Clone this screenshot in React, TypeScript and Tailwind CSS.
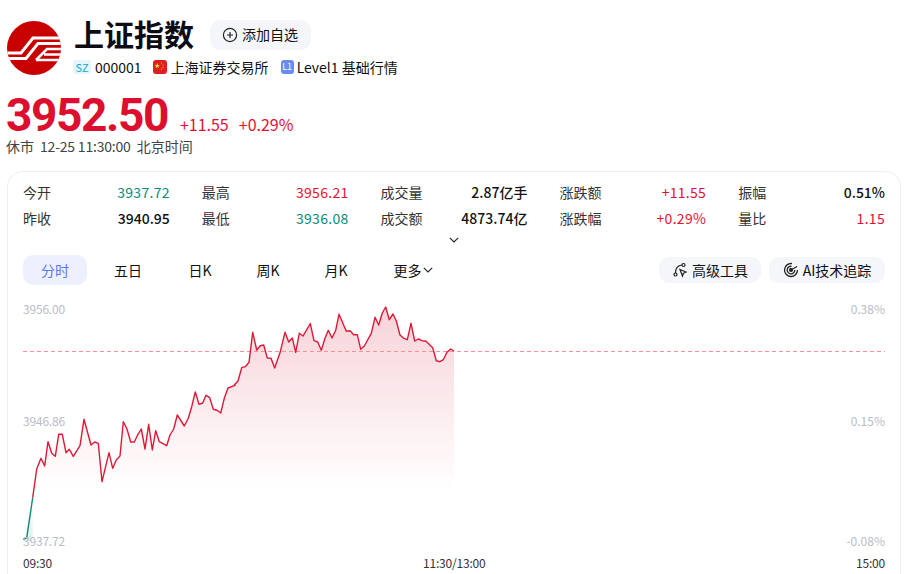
import React from "react";

const PTS_A: [number, number][] = [[70,733],[80,728],[98,608],[110,522],[123,490],[134,513],[144,440],[155,475],[166,484],[176,418],[187,418],[198,473],[208,463],[220,484],[240,452],[252,373],[273,450],[284,441],[295,445],[306,560],[327,473],[338,520],[349,495],[360,483],[370,380],[381,402],[392,441],[403,441],[414,418],[424,402],[435,462],[446,388],[457,465],[467,407],[478,440],[500,452],[510,420],[521,402],[532,360],[553,393],[565,370],[575,335],[586,291],[597,328],[608,324],[618,301],[629,308],[640,343],[651,346],[662,354],[673,310],[684,279],[705,271]];
const PTS_B: [number, number][] = [[12,271],[24,258],[35,218],[46,215],[57,202],[68,112],[80,165],[91,152],[101,150],[112,189],[123,190],[134,219],[151,170],[165,112],[176,141],[187,129],[197,172],[208,115],[219,123],[241,86],[252,137],[263,141],[274,166],[285,130],[295,106],[306,129],[317,106],[327,58],[349,109],[360,107],[371,119],[382,119],[392,163],[403,153],[424,115],[435,67],[446,90],[457,54],[467,36],[478,74],[489,57],[499,78],[510,120],[521,130],[532,134],[543,85],[554,138],[565,132],[576,137],[587,138],[608,158],[619,197],[630,200],[640,194],[651,172],[662,162],[672,168]];
const all = [
  ...PTS_A.map(([x, y]) => [x / 3, 295 + y / 3]),
  ...PTS_B.map(([x, y]) => [230 + x / 3, 295 + y / 3]),
].map(([x, y]) => [+x.toFixed(1), +y.toFixed(1)]);
const green = all.slice(0, 3);
const red = all.slice(2);
const line = (p: number[][]) => p.map((q) => q.join(",")).join(" ");

function Logo() {
  return (
    <svg width="54" height="54" viewBox="0 0 54 54" className="shrink-0">
      <defs>
        <clipPath id="lc"><circle cx="27" cy="27" r="27" /></clipPath>
      </defs>
      <circle cx="27" cy="27" r="27" fill="#c80000" />
      <g clipPath="url(#lc)" fill="none" stroke="#fff" strokeWidth="3">
        <path d="M0 32H14L26 17H54" />
        <path d="M0 37.500H19L31 22.500H54" />
        <path d="M29 39H54M29 39L40 28H54M37 33.500H54" strokeWidth="2.600" />
      </g>
    </svg>
  );
}

function Stat({ label, value, color = "text-[#111]", bold = false }: { label: string; value: string; color?: string; bold?: boolean }) {
  return (
    <div className="flex items-center justify-between h-[26px]">
      <span className="text-[#333]">{label}</span>
      <span className={`${color} ${bold ? "font-medium" : "tracking-[.3px]"}`}>{value}</span>
    </div>
  );
}

const RED = "text-[#e60f32]";
const GREEN = "text-[#0b8a73]";

export default function App() {
  return (
    <div className="h-[574px] w-[910px] overflow-hidden bg-white text-[14px] text-[#111] font-['Noto_Sans_CJK_SC','Noto_Sans',sans-serif]">
      <header className="flex gap-[13px] pl-[7px] pt-[21px]">
        <Logo />
        <div className="flex flex-col -mt-[2px]">
          <div className="flex items-center gap-[16px] h-[32px]">
            <h1 className="text-[30px] leading-[32px] font-bold text-[#0c0c14] mb-[4px]">上证指数</h1>
            <button className="flex items-center gap-[4px] h-[30px] w-[101px] pl-[12px] pb-[2px] rounded-[10px] bg-[#f4f6fa] text-[14px]">
              <svg width="16" height="16" viewBox="0 0 16 16" fill="none" stroke="#222" strokeWidth="1.200" className="mt-[2px]">
                <circle cx="8" cy="8" r="6.600" />
                <path d="M8 5v6M5 8h6" />
              </svg>
              添加自选
            </button>
          </div>
          <div className="flex items-center mt-[7px] -ml-[1px] h-[18px] text-[14px]">
            <span className="flex items-center justify-center w-[18px] h-[14px] rounded-[3px] bg-[#e4f5fb] text-[#16a6d0] text-[11px] mr-[4px]">SZ</span>
            <span>000001</span>
            <svg width="14" height="14" viewBox="0 0 14 14" className="ml-[11px] mr-[4px]">
              <rect width="14" height="14" rx="3" fill="#de1f1f" />
              <path d="M4.200 3l.7 2h2l-1.600 1.200.6 2-1.700-1.200-1.700 1.200.6-2L1.500 5h2z" fill="#ffd83a" />
              <circle cx="8.500" cy="3" r=".6" fill="#ffd83a" />
              <circle cx="10" cy="5" r=".6" fill="#ffd83a" />
              <circle cx="10" cy="7.500" r=".6" fill="#ffd83a" />
              <circle cx="8.500" cy="9" r=".6" fill="#ffd83a" />
            </svg>
            <span>上海证券交易所</span>
            <span className="flex items-center justify-center w-[13px] h-[14px] rounded-[3px] bg-[#6a8cf0] text-white text-[9px] ml-[12px] mr-[3px]">L1</span>
            <span>Level1 基础行情</span>
          </div>
        </div>
      </header>

      <div className="pl-[6px] mt-[16px] flex items-baseline h-[46px]">
        <span className="text-[46px] leading-[46px] font-bold tracking-[-1.400px] text-[#dc0f2f] font-['Roboto',sans-serif]">3952.50</span>
        <span className="ml-[12px] text-[16px] leading-[20px] text-[#e60f32]">+11.55</span>
        <span className="ml-[10px] text-[16px] leading-[20px] text-[#e60f32]">+0.29%</span>
      </div>
      <div className="pl-[6px] h-[16px] leading-[16px] text-[14px] text-[#444] flex gap-[6px]">
        <span>休市</span>
        <span className="tracking-[-.2px]">12-25 11:30:00</span>
        <span>北京时间</span>
      </div>

      <section className="mt-[17px] ml-[7px] w-[894px] h-[420px] border border-b-0 border-[#eeeff1] rounded-t-[16px] px-[15px] pt-[7px]">
        <div className="grid grid-cols-5 gap-x-[32px] text-[14px]">
          <Stat label="今开" value="3937.72" color={GREEN} />
          <Stat label="最高" value="3956.21" color={RED} />
          <Stat label="成交量" value="2.87亿手" bold />
          <Stat label="涨跌额" value="+11.55" color={RED} />
          <Stat label="振幅" value="0.51%" bold />
          <Stat label="昨收" value="3940.95" bold />
          <Stat label="最低" value="3936.08" color={GREEN} />
          <Stat label="成交额" value="4873.74亿" bold />
          <Stat label="涨跌幅" value="+0.29%" color={RED} />
          <Stat label="量比" value="1.15" color={RED} />
        </div>
        <div className="flex justify-center h-[10px] mt-[3px] mb-[11px]">
          <svg width="10" height="6" viewBox="0 0 10 6" fill="none" stroke="#222" strokeWidth="1.100" className="mt-[3px]">
            <path d="M.8.8L5 5 9.200.8" />
          </svg>
        </div>
        <nav className="flex items-center justify-between h-[30px] mb-[12px]">
          <div className="flex items-center text-[14px]">
            <button className="w-[64px] h-[30px] rounded-[10px] bg-[#edf0fd] text-[#5b78f0]">分时</button>
            <button className="w-[82px] h-[30px]">五日</button>
            <button className="w-[62px] h-[30px]">日K</button>
            <button className="w-[74px] h-[30px]">周K</button>
            <button className="w-[62px] h-[30px]">月K</button>
            <button className="flex items-center justify-center w-[92px] h-[30px] gap-[1px]">
              更多
              <svg width="10" height="6" viewBox="0 0 10 6" fill="none" stroke="#222" strokeWidth="1.100">
                <path d="M.8.8L5 5 9.200.8" />
              </svg>
            </button>
          </div>
          <div className="flex items-center gap-[8px] text-[14px]">
            <button className="flex items-center justify-center gap-[4px] w-[102px] h-[26px] rounded-[10px] bg-[#f4f6fa]">
              <svg width="16" height="16" viewBox="0 0 16 16" fill="none" stroke="#222" strokeWidth="1.200">
                <circle cx="3.500" cy="12.500" r="1.500" />
                <circle cx="11.500" cy="3" r="1.500" />
                <path d="M3.500 11C3.500 7 5.500 3.500 10 3" />
                <path d="M8 7.500l6 2.500-2.500 1.300-1 2.700z" />
              </svg>
              高级工具
            </button>
            <button className="flex items-center justify-center gap-[4px] w-[116px] h-[26px] rounded-[10px] bg-[#f4f6fa]">
              <svg width="16" height="16" viewBox="0 0 16 16" fill="none" stroke="#222" strokeWidth="1.300">
                <path d="M14.500 8A6.500 6.500 0 1 1 9 1.600" />
                <path d="M11.800 8A3.800 3.800 0 1 1 8.500 4.300" />
                <circle cx="8" cy="8" r="1.400" fill="#222" />
                <path d="M8 8l6-3.500" />
              </svg>
              AI技术追踪
            </button>
          </div>
        </nav>

        <div className="relative -ml-[15px] w-[893px] h-[256px]">
          <svg width="893" height="256" viewBox="8 297 893 256" className="block">
            <defs>
              <linearGradient id="rf" gradientUnits="userSpaceOnUse" x1="0" y1="306" x2="0" y2="490">
                <stop offset="0" stopColor="#f7d3d9" />
                <stop offset="1" stopColor="#ffffff" />
              </linearGradient>
              <linearGradient id="gf" gradientUnits="userSpaceOnUse" x1="0" y1="495" x2="0" y2="540">
                <stop offset="0" stopColor="#ffffff" />
                <stop offset="1" stopColor="#e2efec" />
              </linearGradient>
            </defs>
            <polygon points={`${line(red)} 454,490 32.700,490`} fill="url(#rf)" />
            <polygon points={`${line(green)} 32.700,541 23.300,541`} fill="url(#gf)" />
            <line x1="23" x2="885" y1="351.500" y2="351.500" stroke="#ff8f96" strokeWidth="1" strokeDasharray="4 3" />
            <polyline points={line(red)} fill="none" stroke="#dc1a38" strokeWidth="1.400" strokeLinejoin="round" />
            <polyline points={line(green)} fill="none" stroke="#0f8a76" strokeWidth="1.400" />
          </svg>
          <span className="absolute left-[15px] top-[4px] text-[12px] leading-[16px] tracking-[-.2px] text-[#b9bcc4]">3956.00</span>
          <span className="absolute left-[15px] top-[116px] text-[12px] leading-[16px] tracking-[-.2px] text-[#b9bcc4]">3946.86</span>
          <span className="absolute left-[15px] top-[236px] text-[12px] leading-[16px] tracking-[-.2px] text-[#b9bcc4]">3937.72</span>
          <span className="absolute right-[16px] top-[4px] text-[12px] leading-[16px] text-[#b9bcc4]">0.38%</span>
          <span className="absolute right-[16px] top-[116px] text-[12px] leading-[16px] text-[#b9bcc4]">0.15%</span>
          <span className="absolute right-[16px] top-[236px] text-[12px] leading-[16px] text-[#b9bcc4]">-0.08%</span>
        </div>
        <div className="relative flex justify-between h-[20px] text-[12px] leading-[20px] tracking-[-.2px] text-[#333]">
          <span>09:30</span>
          <span className="absolute left-[400px] w-[62px] whitespace-nowrap">11:30/13:00</span>
          <span>15:00</span>
        </div>
      </section>
    </div>
  );
}
